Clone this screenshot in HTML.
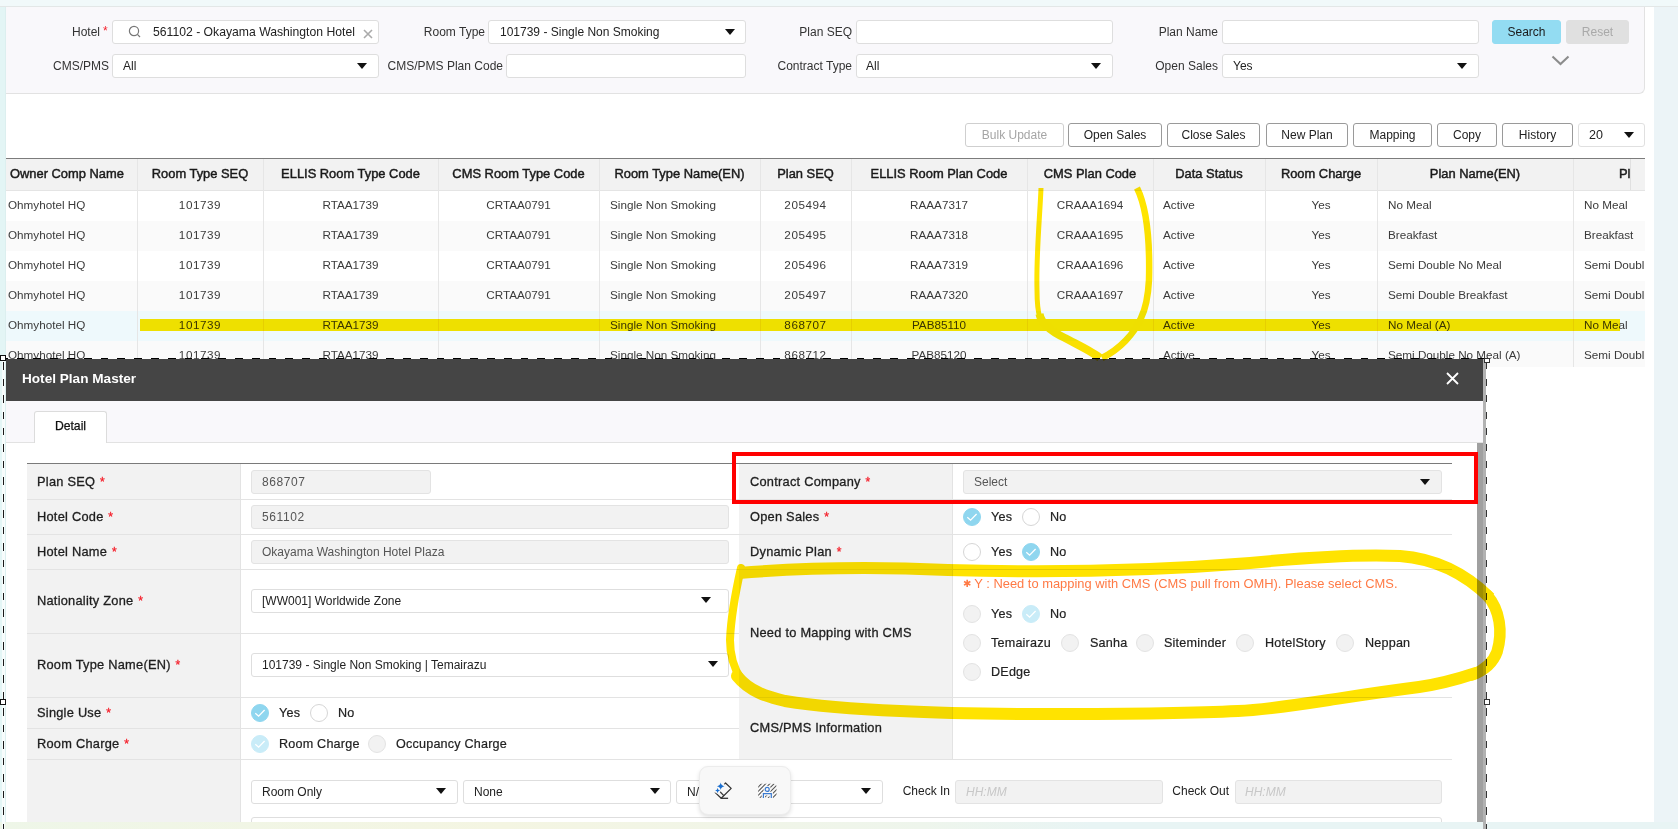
<!DOCTYPE html>
<html><head><meta charset="utf-8"><style>
html,body{margin:0;padding:0;}
body{width:1678px;height:829px;position:relative;overflow:hidden;background:#fff;font-family:"Liberation Sans",sans-serif;font-size:12px;color:#333;}
.t{position:absolute;white-space:nowrap;}
.inp{position:absolute;background:#fff;border:1px solid #dedede;border-radius:3px;box-sizing:border-box;}
.btn{position:absolute;box-sizing:border-box;border:1px solid #9a9a9a;border-radius:3px;background:#fff;text-align:center;color:#222;font-size:12px;}
.req{color:#f5222d;-webkit-text-stroke:0.3px #f5222d;font-size:12px;margin-left:1px;}
.radio{position:absolute;box-sizing:border-box;width:18px;height:18px;border-radius:50%;border:1px solid #d6d6d6;background:#fff;}
.radio.on{background:#8fd6ef;border-color:#8fd6ef;}
.radio.dis{background:#f2f2f2;border-color:#e3e3e3;}
.radio.ondis{background:#c9ecf8;border-color:#c9ecf8;}
</style></head><body>

<div style="position:absolute;left:0px;top:0px;width:1678px;height:6px;background:#f1f9fa;"></div>
<div style="position:absolute;left:0px;top:6px;width:1678px;height:1px;background:#e3e7e7;"></div>
<div style="position:absolute;left:0px;top:7px;width:6px;height:822px;background:#e3f5f5;"></div>
<div style="position:absolute;left:5px;top:7px;width:1px;height:822px;background:#dcefef;"></div>
<div style="position:absolute;left:1654px;top:7px;width:24px;height:822px;background:#ecf4f7;"></div>
<div style="position:absolute;left:6px;top:7px;width:1638px;height:86px;background:#f9f8fb;border-right:1px solid #e2e2e2;border-bottom:1px solid #e2e2e2;border-bottom-right-radius:6px;"></div>
<div class="t" style="left:-500px;width:600px;text-align:right;top:23.5px;line-height:16px;color:#333;font-size:12px;">Hotel</div>
<div class="t" style="left:103px;top:22.5px;line-height:16px;color:#f5222d;font-size:12px;">*</div>
<div class="inp" style="left:112px;top:20px;width:267px;height:24px;"></div>
<svg style="position:absolute;left:128px;top:25px" width="14" height="14" viewBox="0 0 14 14"><circle cx="6" cy="6" r="4.6" fill="none" stroke="#777" stroke-width="1.2"/><line x1="9.4" y1="9.4" x2="12" y2="12" stroke="#777" stroke-width="1.2"/></svg>
<div class="t" style="left:153px;top:23.5px;line-height:16px;color:#222;font-size:12.2px;">561102 - Okayama Washington Hotel</div>
<svg style="position:absolute;left:363px;top:29px" width="10" height="10" viewBox="0 0 10 10"><path d="M1 1L9 9M9 1L1 9" stroke="#aaa" stroke-width="1.6"/></svg>
<div class="t" style="left:-115px;width:600px;text-align:right;top:23.5px;line-height:16px;color:#333;font-size:12px;">Room Type</div>
<div class="inp" style="left:488px;top:20px;width:258px;height:24px;"></div>
<div class="t" style="left:500px;top:23.5px;line-height:16px;color:#222;">101739 - Single Non Smoking</div>
<div style="position:absolute;left:725px;top:29px;width:0;height:0;border-left:5.0px solid transparent;border-right:5.0px solid transparent;border-top:6px solid #111;"></div>
<div class="t" style="left:252px;width:600px;text-align:right;top:23.5px;line-height:16px;color:#333;font-size:12px;">Plan SEQ</div>
<div class="inp" style="left:856px;top:20px;width:257px;height:24px;"></div>
<div class="t" style="left:618px;width:600px;text-align:right;top:23.5px;line-height:16px;color:#333;font-size:12px;">Plan Name</div>
<div class="inp" style="left:1222px;top:20px;width:257px;height:24px;"></div>
<div class="btn" style="left:1492px;top:20px;width:69px;height:24px;line-height:22px;background:#93dcf2;border-color:#93dcf2;color:#1a1a1a;">Search</div>
<div class="btn" style="left:1566px;top:20px;width:63px;height:24px;line-height:22px;background:#e0e0e0;border-color:#e0e0e0;color:#a9a9a9;">Reset</div>
<div class="t" style="left:-491px;width:600px;text-align:right;top:57.5px;line-height:16px;color:#333;font-size:12px;">CMS/PMS</div>
<div class="inp" style="left:112px;top:54px;width:267px;height:24px;"></div>
<div class="t" style="left:123px;top:58.0px;line-height:16px;color:#222;">All</div>
<div style="position:absolute;left:357px;top:63px;width:0;height:0;border-left:5.0px solid transparent;border-right:5.0px solid transparent;border-top:6px solid #111;"></div>
<div class="t" style="left:-97px;width:600px;text-align:right;top:57.5px;line-height:16px;color:#333;font-size:12px;">CMS/PMS Plan Code</div>
<div class="inp" style="left:506px;top:54px;width:240px;height:24px;"></div>
<div class="t" style="left:252px;width:600px;text-align:right;top:57.5px;line-height:16px;color:#333;font-size:12px;">Contract Type</div>
<div class="inp" style="left:856px;top:54px;width:257px;height:24px;"></div>
<div class="t" style="left:866px;top:58.0px;line-height:16px;color:#222;">All</div>
<div style="position:absolute;left:1091px;top:63px;width:0;height:0;border-left:5.0px solid transparent;border-right:5.0px solid transparent;border-top:6px solid #111;"></div>
<div class="t" style="left:618px;width:600px;text-align:right;top:57.5px;line-height:16px;color:#333;font-size:12px;">Open Sales</div>
<div class="inp" style="left:1222px;top:54px;width:257px;height:24px;"></div>
<div class="t" style="left:1233px;top:58.0px;line-height:16px;color:#222;">Yes</div>
<div style="position:absolute;left:1457px;top:63px;width:0;height:0;border-left:5.0px solid transparent;border-right:5.0px solid transparent;border-top:6px solid #111;"></div>
<svg style="position:absolute;left:1551px;top:55px" width="19" height="11" viewBox="0 0 19 11"><path d="M1.5 1.5L9.5 9L17.5 1.5" fill="none" stroke="#8c8c8c" stroke-width="2.1"/></svg>
<div class="btn" style="left:965px;top:123px;width:99px;height:24px;line-height:22px;border-color:#cfcfcf;color:#a5a5a5;">Bulk Update</div>
<div class="btn" style="left:1068px;top:123px;width:94px;height:24px;line-height:22px;">Open Sales</div>
<div class="btn" style="left:1167px;top:123px;width:93px;height:24px;line-height:22px;">Close Sales</div>
<div class="btn" style="left:1266px;top:123px;width:82px;height:24px;line-height:22px;">New Plan</div>
<div class="btn" style="left:1353px;top:123px;width:79px;height:24px;line-height:22px;">Mapping</div>
<div class="btn" style="left:1437px;top:123px;width:60px;height:24px;line-height:22px;">Copy</div>
<div class="btn" style="left:1502px;top:123px;width:71px;height:24px;line-height:22px;">History</div>
<div class="inp" style="left:1578px;top:123px;width:67px;height:24px;border-color:#e0e0e0;"></div>
<div class="t" style="left:1589px;top:127.0px;line-height:16px;color:#222;font-size:12.5px;">20</div>
<div style="position:absolute;left:1624px;top:132px;width:0;height:0;border-left:5.0px solid transparent;border-right:5.0px solid transparent;border-top:6px solid #111;"></div>
<div style="position:absolute;left:6px;top:158px;width:1639px;height:1px;background:#7c7c7c;"></div>
<div style="position:absolute;left:6px;top:159px;width:1639px;height:0.4px;background:#b0b0b0;"></div>
<div style="position:absolute;left:6px;top:159.4px;width:1639px;height:30.6px;background:#f2f2f2;"></div>
<div style="position:absolute;left:6px;top:190px;width:1639px;height:1px;background:#e4e4e4;"></div>
<div style="position:absolute;left:6px;top:191px;width:1639px;height:30px;background:#ffffff;"></div>
<div style="position:absolute;left:6px;top:221px;width:1639px;height:30px;background:#fafafa;"></div>
<div style="position:absolute;left:6px;top:251px;width:1639px;height:30px;background:#ffffff;"></div>
<div style="position:absolute;left:6px;top:281px;width:1639px;height:30px;background:#fafafa;"></div>
<div style="position:absolute;left:6px;top:311px;width:1639px;height:30px;background:#eef9fc;"></div>
<div style="position:absolute;left:6px;top:341px;width:1639px;height:26px;background:#fafafa;"></div>
<div style="position:absolute;left:137px;top:159px;width:1px;height:208px;background:#e6e6e6;"></div>
<div style="position:absolute;left:263px;top:159px;width:1px;height:208px;background:#e6e6e6;"></div>
<div style="position:absolute;left:438px;top:159px;width:1px;height:208px;background:#e6e6e6;"></div>
<div style="position:absolute;left:599px;top:159px;width:1px;height:208px;background:#e6e6e6;"></div>
<div style="position:absolute;left:760px;top:159px;width:1px;height:208px;background:#e6e6e6;"></div>
<div style="position:absolute;left:851px;top:159px;width:1px;height:208px;background:#e6e6e6;"></div>
<div style="position:absolute;left:1027px;top:159px;width:1px;height:208px;background:#e6e6e6;"></div>
<div style="position:absolute;left:1153px;top:159px;width:1px;height:208px;background:#e6e6e6;"></div>
<div style="position:absolute;left:1265px;top:159px;width:1px;height:208px;background:#e6e6e6;"></div>
<div style="position:absolute;left:1377px;top:159px;width:1px;height:208px;background:#e6e6e6;"></div>
<div style="position:absolute;left:1573px;top:159px;width:1px;height:208px;background:#e6e6e6;"></div>
<div style="position:absolute;left:1630px;top:159px;width:1px;height:31px;background:#e0e0e0;"></div>
<div class="t" style="left:10px;top:166.0px;line-height:16px;color:#1a1a1a;font-size:12.9px;-webkit-text-stroke:0.45px #1a1a1a;">Owner Comp Name</div>
<div class="t" style="left:-200.0px;width:800px;text-align:center;top:166.0px;line-height:16px;color:#1a1a1a;font-size:12.9px;-webkit-text-stroke:0.45px #1a1a1a;">Room Type SEQ</div>
<div class="t" style="left:-49.5px;width:800px;text-align:center;top:166.0px;line-height:16px;color:#1a1a1a;font-size:12.9px;-webkit-text-stroke:0.45px #1a1a1a;">ELLIS Room Type Code</div>
<div class="t" style="left:118.5px;width:800px;text-align:center;top:166.0px;line-height:16px;color:#1a1a1a;font-size:12.9px;-webkit-text-stroke:0.45px #1a1a1a;">CMS Room Type Code</div>
<div class="t" style="left:279.5px;width:800px;text-align:center;top:166.0px;line-height:16px;color:#1a1a1a;font-size:12.9px;-webkit-text-stroke:0.45px #1a1a1a;">Room Type Name(EN)</div>
<div class="t" style="left:405.5px;width:800px;text-align:center;top:166.0px;line-height:16px;color:#1a1a1a;font-size:12.9px;-webkit-text-stroke:0.45px #1a1a1a;">Plan SEQ</div>
<div class="t" style="left:539.0px;width:800px;text-align:center;top:166.0px;line-height:16px;color:#1a1a1a;font-size:12.9px;-webkit-text-stroke:0.45px #1a1a1a;">ELLIS Room Plan Code</div>
<div class="t" style="left:690.0px;width:800px;text-align:center;top:166.0px;line-height:16px;color:#1a1a1a;font-size:12.9px;-webkit-text-stroke:0.45px #1a1a1a;">CMS Plan Code</div>
<div class="t" style="left:809.0px;width:800px;text-align:center;top:166.0px;line-height:16px;color:#1a1a1a;font-size:12.9px;-webkit-text-stroke:0.45px #1a1a1a;">Data Status</div>
<div class="t" style="left:921.0px;width:800px;text-align:center;top:166.0px;line-height:16px;color:#1a1a1a;font-size:12.9px;-webkit-text-stroke:0.45px #1a1a1a;">Room Charge</div>
<div class="t" style="left:1075.0px;width:800px;text-align:center;top:166.0px;line-height:16px;color:#1a1a1a;font-size:12.9px;-webkit-text-stroke:0.45px #1a1a1a;">Plan Name(EN)</div>
<div class="t" style="left:1619px;top:166.0px;line-height:16px;color:#1a1a1a;font-size:12.9px;-webkit-text-stroke:0.45px #1a1a1a;">Pl</div>

<div class="t" style="left:8px;top:197.0px;line-height:16px;color:#3a3a3a;font-size:11.7px;">Ohmyhotel HQ</div>
<div class="t" style="left:-200.0px;width:800px;text-align:center;top:197.0px;line-height:16px;color:#3a3a3a;font-size:11.7px;letter-spacing:0.55px;">101739</div>
<div class="t" style="left:-49.5px;width:800px;text-align:center;top:197.0px;line-height:16px;color:#3a3a3a;font-size:11.7px;">RTAA1739</div>
<div class="t" style="left:118.5px;width:800px;text-align:center;top:197.0px;line-height:16px;color:#3a3a3a;font-size:11.7px;">CRTAA0791</div>
<div class="t" style="left:610px;top:197.0px;line-height:16px;color:#3a3a3a;font-size:11.7px;">Single Non Smoking</div>
<div class="t" style="left:405.5px;width:800px;text-align:center;top:197.0px;line-height:16px;color:#3a3a3a;font-size:11.7px;letter-spacing:0.55px;">205494</div>
<div class="t" style="left:539.0px;width:800px;text-align:center;top:197.0px;line-height:16px;color:#3a3a3a;font-size:11.7px;">RAAA7317</div>
<div class="t" style="left:690.0px;width:800px;text-align:center;top:197.0px;line-height:16px;color:#3a3a3a;font-size:11.7px;">CRAAA1694</div>
<div class="t" style="left:1163px;top:197.0px;line-height:16px;color:#3a3a3a;font-size:11.7px;">Active</div>
<div class="t" style="left:921.0px;width:800px;text-align:center;top:197.0px;line-height:16px;color:#3a3a3a;font-size:11.7px;">Yes</div>
<div class="t" style="left:1388px;top:197.0px;line-height:16px;color:#3a3a3a;font-size:11.7px;">No Meal</div>
<div class="t" style="left:8px;top:227.0px;line-height:16px;color:#3a3a3a;font-size:11.7px;">Ohmyhotel HQ</div>
<div class="t" style="left:-200.0px;width:800px;text-align:center;top:227.0px;line-height:16px;color:#3a3a3a;font-size:11.7px;letter-spacing:0.55px;">101739</div>
<div class="t" style="left:-49.5px;width:800px;text-align:center;top:227.0px;line-height:16px;color:#3a3a3a;font-size:11.7px;">RTAA1739</div>
<div class="t" style="left:118.5px;width:800px;text-align:center;top:227.0px;line-height:16px;color:#3a3a3a;font-size:11.7px;">CRTAA0791</div>
<div class="t" style="left:610px;top:227.0px;line-height:16px;color:#3a3a3a;font-size:11.7px;">Single Non Smoking</div>
<div class="t" style="left:405.5px;width:800px;text-align:center;top:227.0px;line-height:16px;color:#3a3a3a;font-size:11.7px;letter-spacing:0.55px;">205495</div>
<div class="t" style="left:539.0px;width:800px;text-align:center;top:227.0px;line-height:16px;color:#3a3a3a;font-size:11.7px;">RAAA7318</div>
<div class="t" style="left:690.0px;width:800px;text-align:center;top:227.0px;line-height:16px;color:#3a3a3a;font-size:11.7px;">CRAAA1695</div>
<div class="t" style="left:1163px;top:227.0px;line-height:16px;color:#3a3a3a;font-size:11.7px;">Active</div>
<div class="t" style="left:921.0px;width:800px;text-align:center;top:227.0px;line-height:16px;color:#3a3a3a;font-size:11.7px;">Yes</div>
<div class="t" style="left:1388px;top:227.0px;line-height:16px;color:#3a3a3a;font-size:11.7px;">Breakfast</div>
<div class="t" style="left:8px;top:257.0px;line-height:16px;color:#3a3a3a;font-size:11.7px;">Ohmyhotel HQ</div>
<div class="t" style="left:-200.0px;width:800px;text-align:center;top:257.0px;line-height:16px;color:#3a3a3a;font-size:11.7px;letter-spacing:0.55px;">101739</div>
<div class="t" style="left:-49.5px;width:800px;text-align:center;top:257.0px;line-height:16px;color:#3a3a3a;font-size:11.7px;">RTAA1739</div>
<div class="t" style="left:118.5px;width:800px;text-align:center;top:257.0px;line-height:16px;color:#3a3a3a;font-size:11.7px;">CRTAA0791</div>
<div class="t" style="left:610px;top:257.0px;line-height:16px;color:#3a3a3a;font-size:11.7px;">Single Non Smoking</div>
<div class="t" style="left:405.5px;width:800px;text-align:center;top:257.0px;line-height:16px;color:#3a3a3a;font-size:11.7px;letter-spacing:0.55px;">205496</div>
<div class="t" style="left:539.0px;width:800px;text-align:center;top:257.0px;line-height:16px;color:#3a3a3a;font-size:11.7px;">RAAA7319</div>
<div class="t" style="left:690.0px;width:800px;text-align:center;top:257.0px;line-height:16px;color:#3a3a3a;font-size:11.7px;">CRAAA1696</div>
<div class="t" style="left:1163px;top:257.0px;line-height:16px;color:#3a3a3a;font-size:11.7px;">Active</div>
<div class="t" style="left:921.0px;width:800px;text-align:center;top:257.0px;line-height:16px;color:#3a3a3a;font-size:11.7px;">Yes</div>
<div class="t" style="left:1388px;top:257.0px;line-height:16px;color:#3a3a3a;font-size:11.7px;">Semi Double No Meal</div>
<div class="t" style="left:8px;top:287.0px;line-height:16px;color:#3a3a3a;font-size:11.7px;">Ohmyhotel HQ</div>
<div class="t" style="left:-200.0px;width:800px;text-align:center;top:287.0px;line-height:16px;color:#3a3a3a;font-size:11.7px;letter-spacing:0.55px;">101739</div>
<div class="t" style="left:-49.5px;width:800px;text-align:center;top:287.0px;line-height:16px;color:#3a3a3a;font-size:11.7px;">RTAA1739</div>
<div class="t" style="left:118.5px;width:800px;text-align:center;top:287.0px;line-height:16px;color:#3a3a3a;font-size:11.7px;">CRTAA0791</div>
<div class="t" style="left:610px;top:287.0px;line-height:16px;color:#3a3a3a;font-size:11.7px;">Single Non Smoking</div>
<div class="t" style="left:405.5px;width:800px;text-align:center;top:287.0px;line-height:16px;color:#3a3a3a;font-size:11.7px;letter-spacing:0.55px;">205497</div>
<div class="t" style="left:539.0px;width:800px;text-align:center;top:287.0px;line-height:16px;color:#3a3a3a;font-size:11.7px;">RAAA7320</div>
<div class="t" style="left:690.0px;width:800px;text-align:center;top:287.0px;line-height:16px;color:#3a3a3a;font-size:11.7px;">CRAAA1697</div>
<div class="t" style="left:1163px;top:287.0px;line-height:16px;color:#3a3a3a;font-size:11.7px;">Active</div>
<div class="t" style="left:921.0px;width:800px;text-align:center;top:287.0px;line-height:16px;color:#3a3a3a;font-size:11.7px;">Yes</div>
<div class="t" style="left:1388px;top:287.0px;line-height:16px;color:#3a3a3a;font-size:11.7px;">Semi Double Breakfast</div>
<div class="t" style="left:8px;top:317.0px;line-height:16px;color:#3a3a3a;font-size:11.7px;">Ohmyhotel HQ</div>
<div class="t" style="left:-200.0px;width:800px;text-align:center;top:317.0px;line-height:16px;color:#3a3a3a;font-size:11.7px;letter-spacing:0.55px;">101739</div>
<div class="t" style="left:-49.5px;width:800px;text-align:center;top:317.0px;line-height:16px;color:#3a3a3a;font-size:11.7px;">RTAA1739</div>
<div class="t" style="left:610px;top:317.0px;line-height:16px;color:#3a3a3a;font-size:11.7px;">Single Non Smoking</div>
<div class="t" style="left:405.5px;width:800px;text-align:center;top:317.0px;line-height:16px;color:#3a3a3a;font-size:11.7px;letter-spacing:0.55px;">868707</div>
<div class="t" style="left:539.0px;width:800px;text-align:center;top:317.0px;line-height:16px;color:#3a3a3a;font-size:11.7px;">PAB85110</div>
<div class="t" style="left:1163px;top:317.0px;line-height:16px;color:#3a3a3a;font-size:11.7px;">Active</div>
<div class="t" style="left:921.0px;width:800px;text-align:center;top:317.0px;line-height:16px;color:#3a3a3a;font-size:11.7px;">Yes</div>
<div class="t" style="left:1388px;top:317.0px;line-height:16px;color:#3a3a3a;font-size:11.7px;">No Meal (A)</div>
<div class="t" style="left:8px;top:347.0px;line-height:16px;color:#3a3a3a;font-size:11.7px;">Ohmyhotel HQ</div>
<div class="t" style="left:-200.0px;width:800px;text-align:center;top:347.0px;line-height:16px;color:#3a3a3a;font-size:11.7px;letter-spacing:0.55px;">101739</div>
<div class="t" style="left:-49.5px;width:800px;text-align:center;top:347.0px;line-height:16px;color:#3a3a3a;font-size:11.7px;">RTAA1739</div>
<div class="t" style="left:610px;top:347.0px;line-height:16px;color:#3a3a3a;font-size:11.7px;">Single Non Smoking</div>
<div class="t" style="left:405.5px;width:800px;text-align:center;top:347.0px;line-height:16px;color:#3a3a3a;font-size:11.7px;letter-spacing:0.55px;">868712</div>
<div class="t" style="left:539.0px;width:800px;text-align:center;top:347.0px;line-height:16px;color:#3a3a3a;font-size:11.7px;">PAB85120</div>
<div class="t" style="left:1163px;top:347.0px;line-height:16px;color:#3a3a3a;font-size:11.7px;">Active</div>
<div class="t" style="left:921.0px;width:800px;text-align:center;top:347.0px;line-height:16px;color:#3a3a3a;font-size:11.7px;">Yes</div>
<div class="t" style="left:1388px;top:347.0px;line-height:16px;color:#3a3a3a;font-size:11.7px;">Semi Double No Meal (A)</div>
<div class="t" style="left:1584px;top:197px;line-height:16px;color:#3a3a3a;font-size:11.7px;width:61px;overflow:hidden;">No Meal</div>
<div class="t" style="left:1584px;top:227px;line-height:16px;color:#3a3a3a;font-size:11.7px;width:61px;overflow:hidden;">Breakfast</div>
<div class="t" style="left:1584px;top:257px;line-height:16px;color:#3a3a3a;font-size:11.7px;width:61px;overflow:hidden;">Semi Double</div>
<div class="t" style="left:1584px;top:287px;line-height:16px;color:#3a3a3a;font-size:11.7px;width:61px;overflow:hidden;">Semi Double</div>
<div class="t" style="left:1584px;top:317px;line-height:16px;color:#3a3a3a;font-size:11.7px;width:61px;overflow:hidden;">No Meal</div>
<div class="t" style="left:1584px;top:347px;line-height:16px;color:#3a3a3a;font-size:11.7px;width:61px;overflow:hidden;">Semi Double</div>
<div style="position:absolute;left:6px;top:359px;width:1477px;height:470px;background:#fff;"></div>
<div style="position:absolute;left:6px;top:359px;width:1477px;height:42px;background:#454545;"></div>
<div class="t" style="left:22px;top:371.0px;line-height:16px;color:#fff;font-weight:bold;font-size:13.6px;">Hotel Plan Master</div>
<svg style="position:absolute;left:1446px;top:372px" width="13" height="13" viewBox="0 0 13 13"><path d="M1 1L12 12M12 1L1 12" stroke="#fff" stroke-width="1.8"/></svg>
<div style="position:absolute;left:6px;top:401px;width:1477px;height:42px;background:#f9f8fb;"></div>
<div style="position:absolute;left:6px;top:442px;width:1477px;height:1px;background:#e2e2e2;"></div>
<div style="position:absolute;left:34px;top:411px;width:73px;height:32px;box-sizing:border-box;background:#fff;border:1px solid #dcdcdc;border-bottom:none;border-radius:3px 3px 0 0;"></div>
<div class="t" style="left:-329.5px;width:800px;text-align:center;top:418.0px;line-height:16px;color:#111;font-size:12.2px;-webkit-text-stroke:0.25px #111;">Detail</div>
<div style="position:absolute;left:1477px;top:443px;width:6px;height:386px;background:#a0a0a0;"></div>
<div style="position:absolute;left:27px;top:463px;width:1425px;height:1px;background:#7a7a7a;"></div>
<div style="position:absolute;left:27px;top:464px;width:1425px;height:0px;"></div>
<div style="position:absolute;left:27px;top:464px;width:213px;height:365px;background:#f2f2f2;"></div>
<div style="position:absolute;left:240px;top:464px;width:1px;height:365px;background:#e3e3e3;"></div>
<div style="position:absolute;left:27px;top:499px;width:712px;height:1px;background:#e3e3e3;"></div>
<div style="position:absolute;left:27px;top:534px;width:712px;height:1px;background:#e3e3e3;"></div>
<div style="position:absolute;left:27px;top:569px;width:712px;height:1px;background:#e3e3e3;"></div>
<div style="position:absolute;left:27px;top:633px;width:712px;height:1px;background:#e3e3e3;"></div>
<div style="position:absolute;left:27px;top:697px;width:712px;height:1px;background:#e3e3e3;"></div>
<div style="position:absolute;left:27px;top:728px;width:712px;height:1px;background:#e3e3e3;"></div>
<div style="position:absolute;left:27px;top:759px;width:712px;height:1px;background:#e3e3e3;"></div>
<div style="position:absolute;left:739px;top:464px;width:214px;height:295px;background:#f2f2f2;"></div>
<div style="position:absolute;left:952px;top:464px;width:1px;height:295px;background:#e3e3e3;"></div>
<div style="position:absolute;left:739px;top:499px;width:713px;height:1px;background:#e3e3e3;"></div>
<div style="position:absolute;left:739px;top:534px;width:713px;height:1px;background:#e3e3e3;"></div>
<div style="position:absolute;left:739px;top:569px;width:713px;height:1px;background:#e3e3e3;"></div>
<div style="position:absolute;left:739px;top:697px;width:713px;height:1px;background:#e3e3e3;"></div>
<div style="position:absolute;left:739px;top:759px;width:713px;height:1px;background:#e3e3e3;"></div>
<div class="t" style="left:37px;top:474.0px;line-height:16px;color:#1e1e1e;font-size:12.8px;letter-spacing:0.25px;-webkit-text-stroke:0.3px #1e1e1e;">Plan SEQ <span class="req">*</span></div>
<div class="t" style="left:37px;top:509.0px;line-height:16px;color:#1e1e1e;font-size:12.8px;letter-spacing:0.25px;-webkit-text-stroke:0.3px #1e1e1e;">Hotel Code <span class="req">*</span></div>
<div class="t" style="left:37px;top:544.0px;line-height:16px;color:#1e1e1e;font-size:12.8px;letter-spacing:0.25px;-webkit-text-stroke:0.3px #1e1e1e;">Hotel Name <span class="req">*</span></div>
<div class="t" style="left:37px;top:593.0px;line-height:16px;color:#1e1e1e;font-size:12.8px;letter-spacing:0.25px;-webkit-text-stroke:0.3px #1e1e1e;">Nationality Zone <span class="req">*</span></div>
<div class="t" style="left:37px;top:657.0px;line-height:16px;color:#1e1e1e;font-size:12.8px;letter-spacing:0.25px;-webkit-text-stroke:0.3px #1e1e1e;">Room Type Name(EN) <span class="req">*</span></div>
<div class="t" style="left:37px;top:705.0px;line-height:16px;color:#1e1e1e;font-size:12.8px;letter-spacing:0.25px;-webkit-text-stroke:0.3px #1e1e1e;">Single Use <span class="req">*</span></div>
<div class="t" style="left:37px;top:736.0px;line-height:16px;color:#1e1e1e;font-size:12.8px;letter-spacing:0.25px;-webkit-text-stroke:0.3px #1e1e1e;">Room Charge <span class="req">*</span></div>
<div class="inp" style="left:251px;top:470px;width:180px;height:24px;background:#f2f2f2;border-color:#e3e3e3;"></div>
<div class="t" style="left:262px;top:474.0px;line-height:16px;color:#555;letter-spacing:0.6px;">868707</div>
<div class="inp" style="left:251px;top:505px;width:478px;height:24px;background:#f2f2f2;border-color:#e3e3e3;"></div>
<div class="t" style="left:262px;top:509.0px;line-height:16px;color:#555;letter-spacing:0.6px;">561102</div>
<div class="inp" style="left:251px;top:540px;width:478px;height:24px;background:#f2f2f2;border-color:#e3e3e3;"></div>
<div class="t" style="left:262px;top:544.0px;line-height:16px;color:#555;">Okayama Washington Hotel Plaza</div>
<div class="inp" style="left:251px;top:589px;width:478px;height:24px;"></div>
<div class="t" style="left:262px;top:593.0px;line-height:16px;color:#222;">[WW001] Worldwide Zone</div>
<div style="position:absolute;left:701px;top:597px;width:0;height:0;border-left:5.0px solid transparent;border-right:5.0px solid transparent;border-top:6px solid #111;"></div>
<div class="inp" style="left:251px;top:653px;width:478px;height:24px;"></div>
<div class="t" style="left:262px;top:657.0px;line-height:16px;color:#222;">101739 - Single Non Smoking | Temairazu</div>
<div style="position:absolute;left:708px;top:661px;width:0;height:0;border-left:5.0px solid transparent;border-right:5.0px solid transparent;border-top:6px solid #111;"></div>
<div class="radio on" style="left:251px;top:704px;"></div><svg style="position:absolute;left:251px;top:704px" width="18" height="18" viewBox="0 0 18 18"><path d="M4.3 9.3L7.6 12.2L13.6 6" fill="none" stroke="#fff" stroke-width="1.3"/></svg>
<div class="t" style="left:279px;top:705.0px;line-height:16px;color:#222;font-size:12.6px;letter-spacing:0.2px;-webkit-text-stroke:0.2px #222;">Yes</div>
<div class="radio " style="left:310px;top:704px;"></div>
<div class="t" style="left:338px;top:705.0px;line-height:16px;color:#222;font-size:12.6px;letter-spacing:0.2px;-webkit-text-stroke:0.2px #222;">No</div>
<div class="radio ondis" style="left:251px;top:735px;"></div><svg style="position:absolute;left:251px;top:735px" width="18" height="18" viewBox="0 0 18 18"><path d="M4.3 9.3L7.6 12.2L13.6 6" fill="none" stroke="#fff" stroke-width="1.3"/></svg>
<div class="t" style="left:279px;top:736.0px;line-height:16px;color:#222;font-size:12.6px;letter-spacing:0.2px;-webkit-text-stroke:0.2px #222;">Room Charge</div>
<div class="radio dis" style="left:368px;top:735px;"></div>
<div class="t" style="left:396px;top:736.0px;line-height:16px;color:#222;font-size:12.6px;letter-spacing:0.2px;-webkit-text-stroke:0.2px #222;">Occupancy Charge</div>
<div class="inp" style="left:251px;top:780px;width:207px;height:24px;"></div>
<div class="t" style="left:262px;top:784.0px;line-height:16px;color:#222;">Room Only</div>
<div style="position:absolute;left:436px;top:788px;width:0;height:0;border-left:5.0px solid transparent;border-right:5.0px solid transparent;border-top:6px solid #111;"></div>
<div class="inp" style="left:463px;top:780px;width:208px;height:24px;"></div>
<div class="t" style="left:474px;top:784.0px;line-height:16px;color:#222;">None</div>
<div style="position:absolute;left:650px;top:788px;width:0;height:0;border-left:5.0px solid transparent;border-right:5.0px solid transparent;border-top:6px solid #111;"></div>
<div class="inp" style="left:676px;top:780px;width:207px;height:24px;"></div>
<div class="t" style="left:687px;top:784.0px;line-height:16px;color:#222;">N/A</div>
<div style="position:absolute;left:861px;top:788px;width:0;height:0;border-left:5.0px solid transparent;border-right:5.0px solid transparent;border-top:6px solid #111;"></div>
<div class="t" style="left:350px;width:600px;text-align:right;top:783.0px;line-height:16px;color:#222;">Check In</div>
<div class="inp" style="left:955px;top:780px;width:208px;height:24px;background:#f2f2f2;border-color:#e3e3e3;"></div>
<div class="t" style="left:966px;top:784.0px;line-height:16px;color:#c8c8c8;font-style:italic;">HH:MM</div>
<div class="t" style="left:629px;width:600px;text-align:right;top:783.0px;line-height:16px;color:#222;">Check Out</div>
<div class="inp" style="left:1235px;top:780px;width:207px;height:24px;background:#f2f2f2;border-color:#e3e3e3;"></div>
<div class="t" style="left:1245px;top:784.0px;line-height:16px;color:#c8c8c8;font-style:italic;">HH:MM</div>
<div class="inp" style="left:251px;top:817px;width:1191px;height:24px;"></div>
<div class="t" style="left:750px;top:474.0px;line-height:16px;color:#1e1e1e;font-size:12.8px;letter-spacing:0.25px;-webkit-text-stroke:0.3px #1e1e1e;">Contract Company <span class="req">*</span></div>
<div class="t" style="left:750px;top:509.0px;line-height:16px;color:#1e1e1e;font-size:12.8px;letter-spacing:0.25px;-webkit-text-stroke:0.3px #1e1e1e;">Open Sales <span class="req">*</span></div>
<div class="t" style="left:750px;top:544.0px;line-height:16px;color:#1e1e1e;font-size:12.8px;letter-spacing:0.25px;-webkit-text-stroke:0.3px #1e1e1e;">Dynamic Plan <span class="req">*</span></div>
<div class="t" style="left:750px;top:625.0px;line-height:16px;color:#1e1e1e;font-size:12.8px;letter-spacing:0.25px;-webkit-text-stroke:0.3px #1e1e1e;">Need to Mapping with CMS</div>
<div class="t" style="left:750px;top:720.0px;line-height:16px;color:#1e1e1e;font-size:12.8px;letter-spacing:0.25px;-webkit-text-stroke:0.3px #1e1e1e;">CMS/PMS Information</div>
<div class="inp" style="left:963px;top:470px;width:479px;height:24px;background:#f2f2f2;border-color:#e3e3e3;"></div>
<div class="t" style="left:974px;top:474.0px;line-height:16px;color:#555;">Select</div>
<div style="position:absolute;left:1420px;top:479px;width:0;height:0;border-left:5.0px solid transparent;border-right:5.0px solid transparent;border-top:6px solid #111;"></div>
<div class="radio on" style="left:963px;top:508px;"></div><svg style="position:absolute;left:963px;top:508px" width="18" height="18" viewBox="0 0 18 18"><path d="M4.3 9.3L7.6 12.2L13.6 6" fill="none" stroke="#fff" stroke-width="1.3"/></svg>
<div class="t" style="left:991px;top:509.0px;line-height:16px;color:#222;font-size:12.6px;letter-spacing:0.2px;-webkit-text-stroke:0.2px #222;">Yes</div>
<div class="radio " style="left:1022px;top:508px;"></div>
<div class="t" style="left:1050px;top:509.0px;line-height:16px;color:#222;font-size:12.6px;letter-spacing:0.2px;-webkit-text-stroke:0.2px #222;">No</div>
<div class="radio " style="left:963px;top:543px;"></div>
<div class="t" style="left:991px;top:544.0px;line-height:16px;color:#222;font-size:12.6px;letter-spacing:0.2px;-webkit-text-stroke:0.2px #222;">Yes</div>
<div class="radio on" style="left:1022px;top:543px;"></div><svg style="position:absolute;left:1022px;top:543px" width="18" height="18" viewBox="0 0 18 18"><path d="M4.3 9.3L7.6 12.2L13.6 6" fill="none" stroke="#fff" stroke-width="1.3"/></svg>
<div class="t" style="left:1050px;top:544.0px;line-height:16px;color:#222;font-size:12.6px;letter-spacing:0.2px;-webkit-text-stroke:0.2px #222;">No</div>
<div class="t" style="left:963px;top:576.0px;line-height:16px;color:#ff7a45;font-size:12.9px;"><span style="font-size:10px;position:relative;top:-1px;">&#x2731;</span> Y : Need to mapping with CMS (CMS pull from OMH). Please select CMS.</div>
<div class="radio dis" style="left:963px;top:605px;"></div>
<div class="t" style="left:991px;top:606.0px;line-height:16px;color:#222;font-size:12.6px;letter-spacing:0.2px;-webkit-text-stroke:0.2px #222;">Yes</div>
<div class="radio ondis" style="left:1022px;top:605px;"></div><svg style="position:absolute;left:1022px;top:605px" width="18" height="18" viewBox="0 0 18 18"><path d="M4.3 9.3L7.6 12.2L13.6 6" fill="none" stroke="#fff" stroke-width="1.3"/></svg>
<div class="t" style="left:1050px;top:606.0px;line-height:16px;color:#222;font-size:12.6px;letter-spacing:0.2px;-webkit-text-stroke:0.2px #222;">No</div>
<div class="radio dis" style="left:963px;top:634px;"></div>
<div class="t" style="left:991px;top:635.0px;line-height:16px;color:#222;font-size:12.6px;letter-spacing:0.2px;-webkit-text-stroke:0.2px #222;">Temairazu</div>
<div class="radio dis" style="left:1061px;top:634px;"></div>
<div class="t" style="left:1090px;top:635.0px;line-height:16px;color:#222;font-size:12.6px;letter-spacing:0.2px;-webkit-text-stroke:0.2px #222;">Sanha</div>
<div class="radio dis" style="left:1136px;top:634px;"></div>
<div class="t" style="left:1164px;top:635.0px;line-height:16px;color:#222;font-size:12.6px;letter-spacing:0.2px;-webkit-text-stroke:0.2px #222;">Siteminder</div>
<div class="radio dis" style="left:1236px;top:634px;"></div>
<div class="t" style="left:1265px;top:635.0px;line-height:16px;color:#222;font-size:12.6px;letter-spacing:0.2px;-webkit-text-stroke:0.2px #222;">HotelStory</div>
<div class="radio dis" style="left:1336px;top:634px;"></div>
<div class="t" style="left:1365px;top:635.0px;line-height:16px;color:#222;font-size:12.6px;letter-spacing:0.2px;-webkit-text-stroke:0.2px #222;">Neppan</div>
<div class="radio dis" style="left:963px;top:663px;"></div>
<div class="t" style="left:991px;top:664.0px;line-height:16px;color:#222;font-size:12.6px;letter-spacing:0.2px;-webkit-text-stroke:0.2px #222;">DEdge</div>
<div style="position:absolute;left:0;top:822px;width:1678px;height:7px;background:linear-gradient(90deg,#eef6e8 0%,#f4f5e2 30%,#eef5ec 55%,#e8f4f4 65%,#e8f4f4 100%);"></div>
<div style="position:absolute;left:6px;top:357.8px;width:1480px;height:1.3px;background:repeating-linear-gradient(90deg,#000 0 1.7px,transparent 1.7px 10.6px,#000 10.6px 16.8px);"></div>
<div style="position:absolute;left:2px;top:360px;width:3px;height:469px;background:#f7fcfc;"></div><div style="position:absolute;left:2.6px;top:362px;width:1.3px;height:467px;background:repeating-linear-gradient(180deg,#1a1a1a 0 7.5px,transparent 7.5px 16.5px);"></div>
<div style="position:absolute;left:1483px;top:359px;width:3px;height:470px;background:#b2b2b2;"></div>
<div style="position:absolute;left:1486px;top:362px;width:1.2px;height:467px;background:repeating-linear-gradient(180deg,#333 0 7px,#fff 7px 16.5px);"></div>
<div style="position:absolute;left:0px;top:355px;width:6px;height:6px;background:#fff;border:1px solid #111;box-sizing:border-box;"></div>
<div style="position:absolute;left:1483.5px;top:357.5px;width:6px;height:5px;background:#fff;border:1px solid #333;box-sizing:border-box;"></div>
<div style="position:absolute;left:0px;top:699px;width:6px;height:6px;background:#fff;border:1px solid #111;box-sizing:border-box;"></div>
<div style="position:absolute;left:1483.5px;top:699px;width:6px;height:6px;background:#fff;border:1px solid #333;box-sizing:border-box;"></div>
<svg style="position:absolute;left:0;top:0;mix-blend-mode:multiply;" width="1678" height="829" viewBox="0 0 1678 829">
<path d="M140 325 L1620 325" stroke="#ffe600" stroke-width="12" fill="none"/>
<g fill="none" stroke="#ffe500" stroke-linecap="butt" stroke-linejoin="round">
<path d="M1041 188 C1040 215 1036 255 1037 290 C1037 303 1038 312 1040 318" stroke-width="5"/>
<path d="M1039.5 314 C1041 322 1048 330 1065 338 C1080 346 1093 352 1100 358" stroke-width="8"/>
<path d="M1137 188 C1146 206 1150 240 1149 280 C1148 298 1145 310 1141 318 C1134 334 1120 349 1102 358" stroke-width="6.5"/>
</g>
<g fill="none" stroke="#ffe300" stroke-linejoin="round">
<path d="M739 573 C800 568 880 567 948 570 C1050 573 1150 571 1250 563 C1300 558 1350 554 1400 556 C1440 559 1470 578 1490 598" stroke-width="12"/>
<path d="M1487 595 C1500 610 1503 632 1497 652 C1493 663 1485 670 1472 675" stroke-width="11.5" stroke-linecap="round"/>
<path d="M1476 673 C1455 680 1440 684 1419 687 C1380 692 1355 696 1329 700 C1290 706 1260 710 1238 711 C1180 714 1125 714 1050 714 C1000 714 953 714 900 711 C850 709 815 706 785 701 C768 697 750 692 737 676" stroke-width="12" stroke-linecap="round"/>
<path d="M741 568 C736 590 731 615 730 640 C730 656 733 667 741 679" stroke-width="8" stroke-linecap="round"/>
</g>
</svg>
<div style="position:absolute;left:732px;top:452px;width:746px;height:52px;box-sizing:border-box;border:4.5px solid #ff0000;"></div>
<div style="position:absolute;left:699px;top:766px;width:92px;height:49px;box-sizing:border-box;border-radius:9px;background:#f8f8f8;border:1px solid #ececec;box-shadow:0 2px 4px rgba(0,0,0,0.12);"></div>
<svg style="position:absolute;left:713px;top:780px" width="21" height="21" viewBox="0 0 21 21">
<path d="M12.5 3 L18.2 8.4 L8.2 18.2 L2.3 12.6 Z" fill="none" stroke="#333" stroke-width="1.25" stroke-linejoin="round"/>
<path d="M6.8 11.5 L10.8 15.6" stroke="#333" stroke-width="1.2"/>
<path d="M7.7 18.3 L15.1 18.3" stroke="#333" stroke-width="1.3"/>
<circle cx="7.7" cy="6.3" r="4.3" fill="#f8f8f8"/>
<circle cx="4.6" cy="10.6" r="3.0" fill="#f8f8f8"/>
<path d="M7.7 2.5 Q8.2 5.8 11.5 6.3 Q8.2 6.8 7.7 10.1 Q7.2 6.8 3.9 6.3 Q7.2 5.8 7.7 2.5Z" fill="#1a6fd0"/>
<path d="M4.6 8.1 Q4.9 10.3 7.1 10.6 Q4.9 10.9 4.6 13.1 Q4.3 10.9 2.1 10.6 Q4.3 10.3 4.6 8.1Z" fill="#1a6fd0"/>
</svg>
<svg style="position:absolute;left:757px;top:782px" width="21" height="18" viewBox="0 0 21 18">
<defs><clipPath id="hc"><rect x="1.2" y="1.7" width="18.3" height="14.3" rx="3"/></clipPath></defs>
<g clip-path="url(#hc)" stroke="#555" stroke-width="1.05">
<path d="M-16 18 L2 0 M-11.8 18 L6.2 0 M-7.6 18 L10.4 0 M-3.4 18 L14.6 0 M0.8 18 L18.8 0 M5 18 L23 0 M9.2 18 L27.2 0 M13.4 18 L31.4 0 M17.6 18 L35.6 0"/>
</g>
<circle cx="10.2" cy="7.4" r="3.7" fill="#f8f8f8"/>
<path d="M6.4 18 V11.7 H14.2 V18" fill="none" stroke="#f8f8f8" stroke-width="3.4"/>
<circle cx="10.2" cy="7.4" r="2.0" fill="#f8f8f8" stroke="#3b7bd0" stroke-width="1.2"/>
<path d="M6.4 16 V11.7 H14.3 V16" fill="none" stroke="#3b7bd0" stroke-width="1.2"/>
</svg>
</body></html>
